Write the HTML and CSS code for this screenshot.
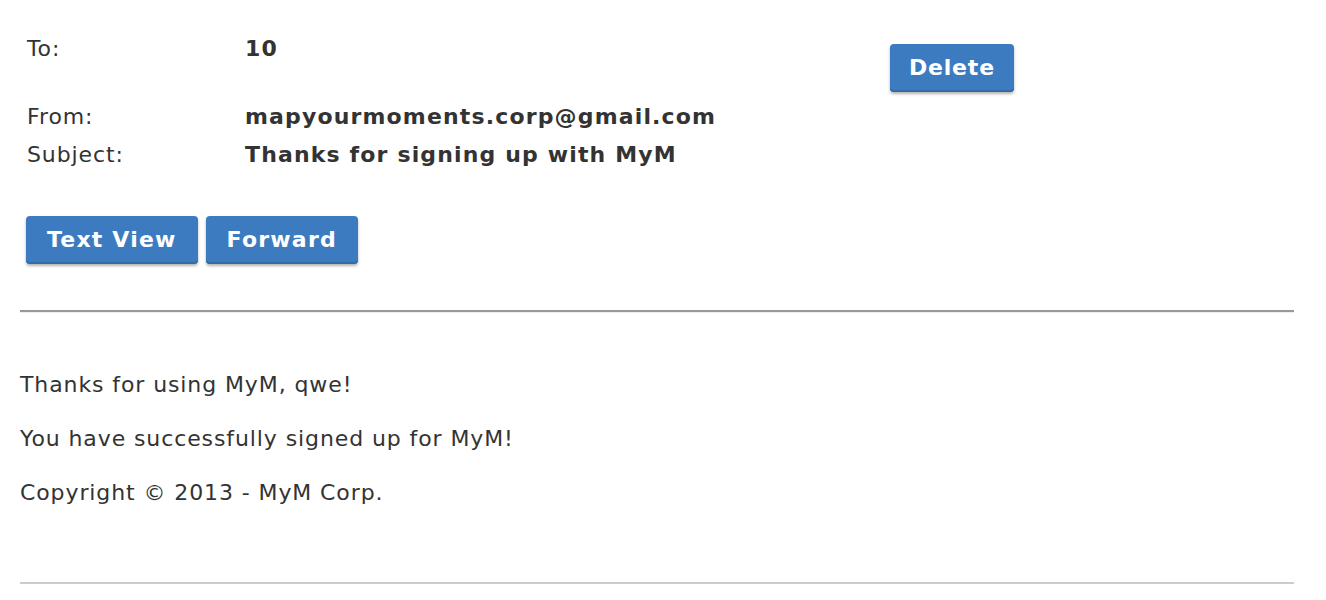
FILE: index.html
```html
<!DOCTYPE html>
<html>
<head>
<meta charset="utf-8">
<link rel="stylesheet" href="styles.css">
</head>
<body>
<div class="page">
  <div class="meta">
    <div class="label row-to">To:</div>
    <div class="value row-to">10</div>
    <div class="actions"><button class="btn btn-delete">Delete</button></div>
    <div class="label">From:</div>
    <div class="value">mapyourmoments.corp@gmail.com</div>
    <div class="label">Subject:</div>
    <div class="value">Thanks for signing up with MyM</div>
  </div>
  <div class="toolbar">
    <button class="btn">Text View</button>
    <button class="btn">Forward</button>
  </div>
  <hr class="sep">
  <div class="body">
    <p>Thanks for using MyM, qwe!</p>
    <p>You have successfully signed up for MyM!</p>
    <p>Copyright © 2013 - MyM Corp.</p>
  </div>
  <hr class="end">
</div>
</body>
</html>
```
FILE: styles.css
```css
html, body {
  margin: 0;
  padding: 0;
  background: #fff;
}
body {
  font-family: "DejaVu Sans", Verdana, sans-serif;
  font-size: 22px;
  letter-spacing: 0.9px;
  color: #333;
}
.page {
  width: 1274px;
  margin-left: 20px;
  padding-top: 30px;
}
.meta {
  display: grid;
  grid-template-columns: 225px 645px auto;
  line-height: 38px;
}
.meta .label {
  grid-column: 1;
  padding-left: 7px;
}
.meta .value {
  grid-column: 2;
  font-weight: bold;
  letter-spacing: 1.15px;
}
.meta .row-to {
  margin-bottom: 30px;
}
.actions {
  grid-column: 3;
  grid-row: 1 / 4;
  align-self: start;
  margin-top: 14px;
}
.btn {
  font-family: "DejaVu Sans", Verdana, sans-serif;
  font-weight: bold;
  font-size: 22px;
  letter-spacing: 1.2px;
  color: #fff;
  background: #3c7bbf;
  border: none;
  border-radius: 4px;
  height: 48px;
  padding: 0 21px;
  box-shadow: 0 2px 3px rgba(0, 0, 0, 0.3), inset 0 -2px 0 #326ba8;
  cursor: pointer;
  line-height: 46px;
}
.btn-delete {
  padding: 0 19px;
  letter-spacing: 0.8px;
}
.toolbar {
  display: flex;
  gap: 8px;
  padding-left: 6px;
  margin-top: 42px;
}
.sep {
  margin: 46px 0 0;
  border: none;
  border-top: 2px solid #999;
  border-bottom: 1px solid #eee;
  height: 0;
}
.body {
  padding-top: 58px;
}
.body p {
  margin: 0 0 26px;
  line-height: 28px;
}
.end {
  margin: 75px 0 0;
  border: none;
  border-top: 2px solid #ccc;
  height: 0;
}
```
